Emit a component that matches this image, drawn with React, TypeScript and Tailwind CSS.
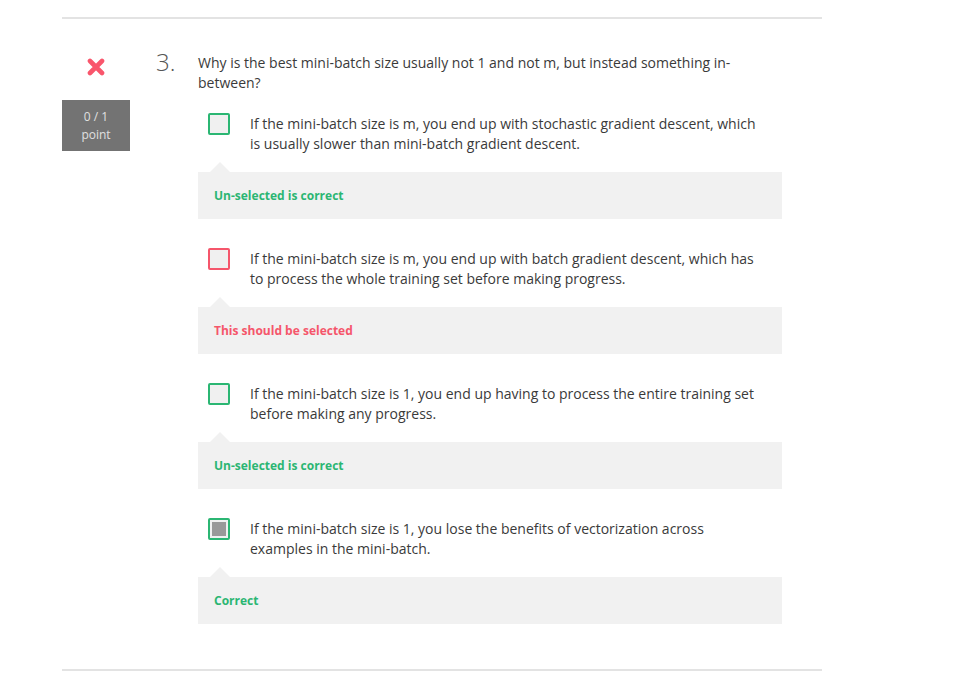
import React from "react";

type Opt = {
  text: string;
  state: "green" | "red";
  checked?: boolean;
  feedback: string;
};

const options: Opt[] = [
  {
    text: "If the mini-batch size is m, you end up with stochastic gradient descent, which is usually slower than mini-batch gradient descent.",
    state: "green",
    feedback: "Un-selected is correct",
  },
  {
    text: "If the mini-batch size is m, you end up with batch gradient descent, which has to process the whole training set before making progress.",
    state: "red",
    feedback: "This should be selected",
  },
  {
    text: "If the mini-batch size is 1, you end up having to process the entire training set before making any progress.",
    state: "green",
    feedback: "Un-selected is correct",
  },
  {
    text: "If the mini-batch size is 1, you lose the benefits of vectorization across examples in the mini-batch.",
    state: "green",
    checked: true,
    feedback: "Correct",
  },
];

function Option({ o, first }: { o: Opt; first: boolean }) {
  const green = o.state === "green";
  return (
    <div className={first ? "mt-[21px]" : "mt-[30px]"}>
      <div className="flex items-start pl-[10px]">
        <div
          className={
            "mt-[-1px] w-[22px] h-[22px] shrink-0 rounded-[2px] border-2 bg-[#f0f0f0] flex items-center justify-center " +
            (green ? "border-[#2bb673]" : "border-[#f5566b]")
          }
        >
          {o.checked ? <div className="w-[14px] h-[14px] bg-[#999999]" /> : null}
        </div>
        <p className="ml-[20px] w-[515px] text-[14px] leading-[20px] text-[#3a3a3a]">{o.text}</p>
      </div>
      <div className="mt-[8px] ml-[12px] w-0 h-0 border-l-[10px] border-r-[10px] border-b-[10px] border-l-transparent border-r-transparent border-b-[#f1f1f1]" />
      <div className="h-[47px] bg-[#f1f1f1] pl-[16px] flex items-center">
        <span
          className={
            "text-[12px] font-bold leading-[18px] " +
            (green ? "text-[#2bb673]" : "text-[#f5566b]")
          }
        >
          {o.feedback}
        </span>
      </div>
    </div>
  );
}

export default function App() {
  return (
    <div
      className="min-h-[679px] bg-white pt-[17px] pl-[62px]"
      style={{ fontFamily: '"Open Sans", "Liberation Sans", sans-serif' }}
    >
      <div className="w-[760px] border-t-2 border-b-2 border-[#e3e3e3] pb-[45px]">
        <div className="flex">
          <div className="w-[68px] shrink-0 flex flex-col items-center pt-[39px]">
            <svg width="18" height="18" viewBox="0 0 18 18">
              <path d="M3 3 L15 15 M15 3 L3 15" stroke="#f9566c" strokeWidth="4.6" strokeLinecap="round" />
            </svg>
            <div className="mt-[24px] w-[68px] h-[51px] bg-[#737373] text-[#e0e0e0] text-[12px] leading-[18px] pt-[8px] text-center">
              <div>0 / 1</div>
              <div>point</div>
            </div>
          </div>
          <div className="w-[68px] shrink-0 pl-[26px] pt-[28px]">
            <span className="text-[24px] font-light leading-[30px] text-[#555555]">3.</span>
          </div>
          <div className="w-[584px] pt-[34px]">
            <p className="text-[14px] leading-[20px] text-[#3a3a3a]">
              Why is the best mini-batch size usually not 1 and not m, but instead something in-between?
            </p>
            {options.map((o, i) => (
              <Option key={i} o={o} first={i === 0} />
            ))}
          </div>
        </div>
      </div>
    </div>
  );
}
